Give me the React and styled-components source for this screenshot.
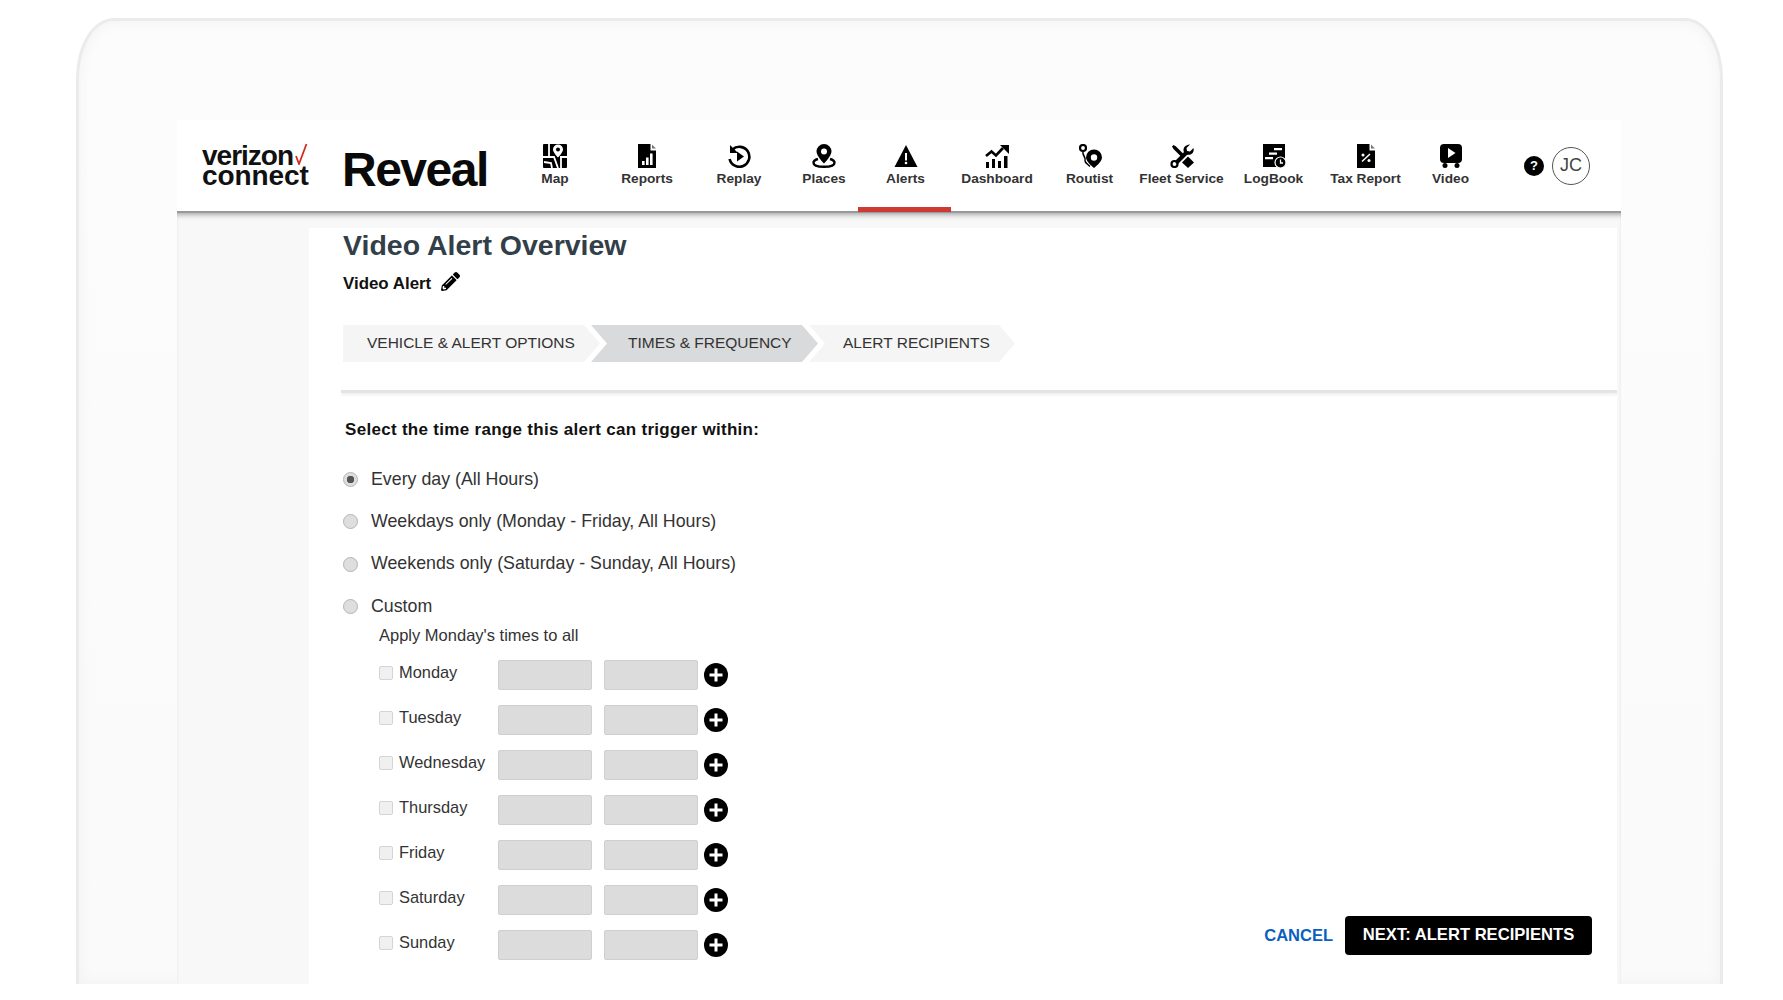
import styled, { createGlobalStyle } from "styled-components";
import { FaPencilAlt } from "react-icons/fa";

const GlobalStyle = createGlobalStyle`
  html, body {
    margin: 0;
    padding: 0;
    background: #fff;
    font-family: "Liberation Sans", Arial, sans-serif;
    color: #333;
  }
  * { box-sizing: border-box; }
`;

const NAV = [
  { label: "Map", width: 92, icon: "map" },
  { label: "Reports", width: 92, icon: "reports" },
  { label: "Replay", width: 92, icon: "replay" },
  { label: "Places", width: 78, icon: "places" },
  { label: "Alerts", width: 85, icon: "alerts", active: true },
  { label: "Dashboard", width: 98, icon: "dashboard" },
  { label: "Routist", width: 87, icon: "routist" },
  { label: "Fleet Service", width: 97, icon: "fleet" },
  { label: "LogBook", width: 87, icon: "logbook" },
  { label: "Tax Report", width: 97, icon: "tax" },
  { label: "Video", width: 73, icon: "video" },
];

const RANGES = [
  { label: "Every day (All Hours)", checked: true },
  { label: "Weekdays only (Monday - Friday, All Hours)" },
  { label: "Weekends only (Saturday - Sunday, All Hours)" },
  { label: "Custom" },
];

const DAYS = ["Monday", "Tuesday", "Wednesday", "Thursday", "Friday", "Saturday", "Sunday"];

const ICONS = {
  map: (
    <>
      <rect width="24" height="24" rx="1" fill="#000" />
      <path d="M6 0v12M0 13h11l4 11M17 13h7M18 13v11M1 18l7 1 1 5" stroke="#fff" strokeWidth="1.8" fill="none" />
      <path d="M15 .5a5 5 0 0 1 5 5c0 3-5 8-5 8s-5-5-5-8a5 5 0 0 1 5-5z" fill="#fff" />
      <circle cx="15" cy="5.5" r="2" fill="#000" />
    </>
  ),
  reports: (
    <>
      <path d="M3 0h12.500v6.500H21V24H3z" fill="#000" />
      <path d="M17 .5l4 4h-4z" fill="#777" />
      <path d="M7 17h2.600v4H7zM11 13.500h2.600V21H11zM15 9.500h2.600V21H15z" fill="#fff" />
    </>
  ),
  replay: (
    <>
      <path d="M5.500 5.500A10 10 0 1 1 2.600 15" stroke="#000" strokeWidth="2.600" fill="none" />
      <path d="M3 1v8h8z" fill="#000" />
      <path d="M10 7.500l7 5-7 5z" fill="#000" />
    </>
  ),
  places: (
    <>
      <path d="M12 0a7.500 7.500 0 0 1 7.500 7.500C19.500 12 12 19.500 12 19.500S4.500 12 4.500 7.500A7.500 7.500 0 0 1 12 0z" fill="#000" />
      <circle cx="12" cy="7.500" r="3" fill="#fff" />
      <path d="M6 15c-3 .8-4.500 2.200-4.500 3.800 0 2.600 4.700 4 10.500 4s10.500-1.400 10.500-4c0-1.600-1.500-3-4.500-3.800" stroke="#000" strokeWidth="2.400" fill="none" />
    </>
  ),
  alerts: (
    <>
      <path d="M12 1l11.500 22H.5z" fill="#000" />
      <path d="M11 9h2v7.500h-2z" fill="#fff" />
      <circle cx="12" cy="19" r="1.300" fill="#fff" />
    </>
  ),
  dashboard: (
    <>
      <path d="M1 12l5.500-4.500 4.500 4 7-7.500" stroke="#000" strokeWidth="2.600" fill="none" />
      <path d="M15 1h9v9z" fill="#000" />
      <path d="M1 18h3v6H1zM7 15h3v9H7zM13 17h3v7h-3zM19 12h3.500v12H19z" fill="#000" />
    </>
  ),
  routist: (
    <>
      <circle cx="5" cy="4" r="3" stroke="#000" strokeWidth="2.200" fill="none" />
      <path d="M5 7.500c-1 4 3 5 2 9-.3 2 2 3 5 6" stroke="#000" strokeWidth="1.500" fill="none" />
      <path d="M16 5.500a8 8 0 0 1 8 8c0 4.500-8 10.500-8 10.500s-8-6-8-10.500a8 8 0 0 1 8-8z" fill="#000" />
      <circle cx="16" cy="13.500" r="3.200" fill="#fff" />
    </>
  ),
  fleet: (
    <>
      <path d="M3.500 1l2.500 1.500 9 9-2.500 2.500-9-9L2 2.500z" fill="#000" />
      <path d="M18 12.500l6 6-6 5.500-6-5.500z" fill="#000" />
      <path d="M16.500 8.500L6 19" stroke="#000" strokeWidth="4" fill="none" />
      <circle cx="4.500" cy="20" r="3" stroke="#000" strokeWidth="2.200" fill="none" />
      <path d="M20 .5l-3.500 3.500.5 3 3 .5L23.500 4c.8 3-.5 5.500-3 6.500-2.500.8-5 0-6.500-2-1-2.500-.5-5 1.500-6.500C17 .8 18.500.3 20 .5z" fill="#000" />
    </>
  ),
  logbook: (
    <>
      <rect x="1" width="22" height="23" fill="#000" />
      <path d="M12 4h8v2.200h-8zM7 8.500h8v2.200H7zM3 13h8v2.200H3z" fill="#fff" />
      <circle cx="18.500" cy="18.500" r="5.500" fill="#000" stroke="#fff" strokeWidth="1.200" />
      <path d="M18.500 15.500v3.500h2.500" stroke="#fff" strokeWidth="1.300" fill="none" />
    </>
  ),
  tax: (
    <>
      <path d="M3 0h12.500v6.500H21V24H3z" fill="#000" />
      <path d="M17 .5l4 4h-4z" fill="#777" />
      <path d="M8 17.500L16 10" stroke="#fff" strokeWidth="1.500" />
      <circle cx="9" cy="11" r="1.500" fill="#fff" />
      <circle cx="15" cy="16.500" r="1.500" fill="#fff" />
    </>
  ),
  video: (
    <>
      <rect x="1" width="22" height="19" rx="4" fill="#000" />
      <path d="M9 4l7.500 5L9 14z" fill="#fff" />
      <circle cx="6" cy="21.500" r="2.500" fill="#000" />
      <circle cx="18" cy="21.500" r="2.500" fill="#000" />
    </>
  ),
};

export default function App() {
  return (
    <>
      <GlobalStyle />
      <Frame>
        <Screen>
          <Header>
            <Brand>
              <Verizon>verizon</Verizon>
              <Connect>connect</Connect>
              <Check viewBox="0 0 14 22">
                <path d="M2 13l3 8L12.500 1" stroke="#d52b1e" strokeWidth="1.800" fill="none" />
              </Check>
            </Brand>
            <Reveal>Reveal</Reveal>
            <Nav>
              {NAV.map((item) => (
                <NavItem key={item.label} $width={item.width} $active={item.active}>
                  <NavIcon viewBox="0 0 24 24">{ICONS[item.icon]}</NavIcon>
                  <NavLabel>{item.label}</NavLabel>
                </NavItem>
              ))}
            </Nav>
            <Help>?</Help>
            <Avatar>JC</Avatar>
          </Header>
          <Body>
            <Main>
              <Title>Video Alert Overview</Title>
              <AlertName>
                Video Alert <FaPencilAlt size={19} color="#000" />
              </AlertName>
              <Steps>
                <Step $width={257} $pad={24} $first>VEHICLE &amp; ALERT OPTIONS</Step>
                <Step $width={227} $pad={37} $active>TIMES &amp; FREQUENCY</Step>
                <Step $width={206} $pad={34}>ALERT RECIPIENTS</Step>
              </Steps>
              <Divider />
              <Heading>Select the time range this alert can trigger within:</Heading>
              <Ranges>
                {RANGES.map((range) => (
                  <RangeRow key={range.label}>
                    <Radio type="radio" name="range" defaultChecked={range.checked} />
                    {range.label}
                  </RangeRow>
                ))}
              </Ranges>
              <Lower>
                <div>
                  <ApplyAll>Apply Monday's times to all</ApplyAll>
                  <Days>
                    {DAYS.map((day) => (
                      <DayRow key={day}>
                        <DayLabel>
                          <DayCheck type="checkbox" disabled />
                          {day}
                        </DayLabel>
                        <TimeInput disabled />
                        <TimeInput disabled />
                        <AddIcon viewBox="0 0 24 24">
                          <circle cx="12" cy="12" r="12" fill="#000" />
                          <path d="M12 5.500v13M5.500 12h13" stroke="#fff" strokeWidth="3" />
                        </AddIcon>
                      </DayRow>
                    ))}
                  </Days>
                </div>
                <Actions>
                  <Cancel>CANCEL</Cancel>
                  <NextButton>NEXT: ALERT RECIPIENTS</NextButton>
                </Actions>
              </Lower>
            </Main>
          </Body>
        </Screen>
      </Frame>
    </>
  );
}

const Frame = styled.div`
  width: 1647px;
  height: 966px;
  margin: 18px 0 16px 76px;
  padding: 99px 0 0 98px;
  background: linear-gradient(#fcfcfc, #fafafa);
  border: solid #ebebeb;
  border-width: 3px 3px 0 3px;
  border-radius: 38px 38px 0 0 / 60px 60px 0 0;
  box-shadow: inset 0 0 14px #f1f1f1;
  overflow: hidden;
`;
const Screen = styled.div`
  width: 1444px;
  height: 864px;
  display: flex;
  flex-direction: column;
`;
const Header = styled.header`
  height: 93px;
  flex: none;
  display: flex;
  align-items: center;
  padding-left: 25px;
  background: #fff;
  border-bottom: 2px solid #999;
  position: relative;
  z-index: 1;
`;
const Brand = styled.div`
  position: relative;
  width: 107px;
  margin-top: 1px;
  font-weight: 700;
  font-size: 28px;
  line-height: 20px;
  color: #111;
`;
const Verizon = styled.div`
  letter-spacing: -1px;
`;
const Connect = styled.div`
  letter-spacing: -0.1px;
`;
const Check = styled.svg`
  position: absolute;
  right: 1px;
  top: -3px;
  width: 14px;
  height: 22px;
`;
const Reveal = styled.div`
  width: 146px;
  margin: 9px 0 0 33px;
  font-weight: 700;
  font-size: 48px;
  line-height: 50px;
  letter-spacing: -1.5px;
  color: #0a0a0a;
`;
const Nav = styled.nav`
  display: flex;
  align-self: stretch;
  margin-left: 21px;
`;
const NavItem = styled.div`
  position: relative;
  width: ${(p) => p.$width}px;
  padding-top: 24px;
  display: flex;
  flex-direction: column;
  align-items: center;
  ${(p) =>
    p.$active &&
    `
    &::after {
      content: "";
      position: absolute;
      left: -5px;
      right: -3px;
      bottom: -1px;
      height: 5px;
      background: #cd3a32;
    }
  `}
`;
const NavIcon = styled.svg`
  width: 24px;
  height: 24px;
  flex: none;
`;
const NavLabel = styled.span`
  margin-top: 3px;
  font-size: 13.7px;
  font-weight: 700;
  line-height: 16px;
  color: #333;
  white-space: nowrap;
`;
const Help = styled.div`
  width: 20px;
  height: 20px;
  margin-left: 37px;
  border-radius: 50%;
  background: #000;
  color: #fff;
  font-size: 13px;
  font-weight: 700;
  line-height: 20px;
  text-align: center;
`;
const Avatar = styled.div`
  width: 38px;
  height: 38px;
  margin-left: 8px;
  border: 1.5px solid #555;
  border-radius: 50%;
  font-size: 18px;
  line-height: 35px;
  text-align: center;
  color: #444;
`;
const Body = styled.div`
  flex: 1;
  display: flex;
  padding: 15px 4px 0 132px;
  background: #f8f8f8;
  box-shadow: inset 0 5px 5px -3px #aaa;
  min-height: 0;
`;
const Main = styled.main`
  flex: 1;
  padding: 1px 25px 0 34px;
  background: #fff;
`;
const Title = styled.h1`
  margin: 0;
  font-size: 28.5px;
  line-height: 32px;
  font-weight: 700;
  color: #333f48;
`;
const AlertName = styled.div`
  display: flex;
  align-items: center;
  gap: 10px;
  margin-top: 11px;
  font-size: 16.9px;
  line-height: 24px;
  font-weight: 700;
  color: #111;
  svg {
    margin-top: -6px;
  }
`;
const Steps = styled.div`
  display: flex;
  margin-top: 29px;
`;
const Step = styled.div`
  width: ${(p) => p.$width}px;
  height: 37px;
  margin-left: ${(p) => (p.$first ? 0 : -9)}px;
  padding-left: ${(p) => p.$pad}px;
  font-size: 15.5px;
  line-height: 36px;
  color: #333;
  background: ${(p) => (p.$active ? "#d9dadb" : "#f5f5f5")};
  clip-path: ${(p) =>
    p.$first
      ? "polygon(0 0, calc(100% - 16px) 0, 100% 50%, calc(100% - 16px) 100%, 0 100%)"
      : "polygon(0 0, calc(100% - 16px) 0, 100% 50%, calc(100% - 16px) 100%, 0 100%, 16px 50%)"};
`;
const Divider = styled.div`
  height: 3px;
  margin: 28px -25px 0 -2px;
  background: #e4e4e4;
  box-shadow: 0 2px 3px #eee;
`;
const Heading = styled.h2`
  margin: 27px 0 0 2px;
  font-size: 17px;
  line-height: 20px;
  font-weight: 700;
  color: #111;
  letter-spacing: 0.3px;
`;
const Ranges = styled.div`
  display: flex;
  flex-direction: column;
  gap: 18.3px;
  margin-top: 26.7px;
`;
const RangeRow = styled.label`
  display: flex;
  align-items: center;
  height: 24px;
  font-size: 17.8px;
  line-height: 22px;
  color: #333;
`;
const Radio = styled.input`
  appearance: none;
  width: 15px;
  height: 15px;
  margin: 2px 13px 0 0;
  border: 1px solid #b4b4b4;
  border-radius: 50%;
  background: #dedede;
  &:checked {
    background: radial-gradient(circle, #555 0 3.5px, #dedede 4px);
  }
`;
const Lower = styled.div`
  display: flex;
  justify-content: space-between;
  align-items: flex-end;
  padding-left: 36px;
`;
const ApplyAll = styled.div`
  margin-top: 7px;
  font-size: 16.5px;
  line-height: 20px;
  color: #333;
`;
const Days = styled.div`
  display: flex;
  flex-direction: column;
  gap: 15px;
  margin-top: 15.2px;
`;
const DayRow = styled.div`
  display: flex;
  align-items: center;
  height: 30px;
`;
const DayLabel = styled.label`
  width: 119px;
  display: flex;
  align-items: center;
  margin-bottom: 4px;
  font-size: 16.4px;
  color: #333;
`;
const DayCheck = styled.input`
  appearance: none;
  width: 14px;
  height: 14px;
  margin: 0 6px 0 0;
  border: 1px solid #d4d4d4;
  border-radius: 2px;
  background: #f0f0f0;
`;
const TimeInput = styled.input`
  width: 94px;
  height: 30px;
  margin-right: 12px;
  border: 1px solid #cfcfcf;
  border-radius: 2px;
  background: #dcdcdc;
`;
const AddIcon = styled.svg`
  width: 24px;
  height: 24px;
  margin-left: -6px;
`;
const Actions = styled.div`
  display: flex;
  align-items: center;
  margin-bottom: 5px;
`;
const Cancel = styled.a`
  margin-right: 12px;
  font-size: 16.5px;
  font-weight: 700;
  color: #0b5fbf;
  cursor: pointer;
`;
const NextButton = styled.button`
  width: 247px;
  height: 39px;
  padding: 0;
  border: none;
  border-radius: 4px;
  background: #000;
  color: #fff;
  font-family: inherit;
  font-size: 16.6px;
  font-weight: 700;
`;
